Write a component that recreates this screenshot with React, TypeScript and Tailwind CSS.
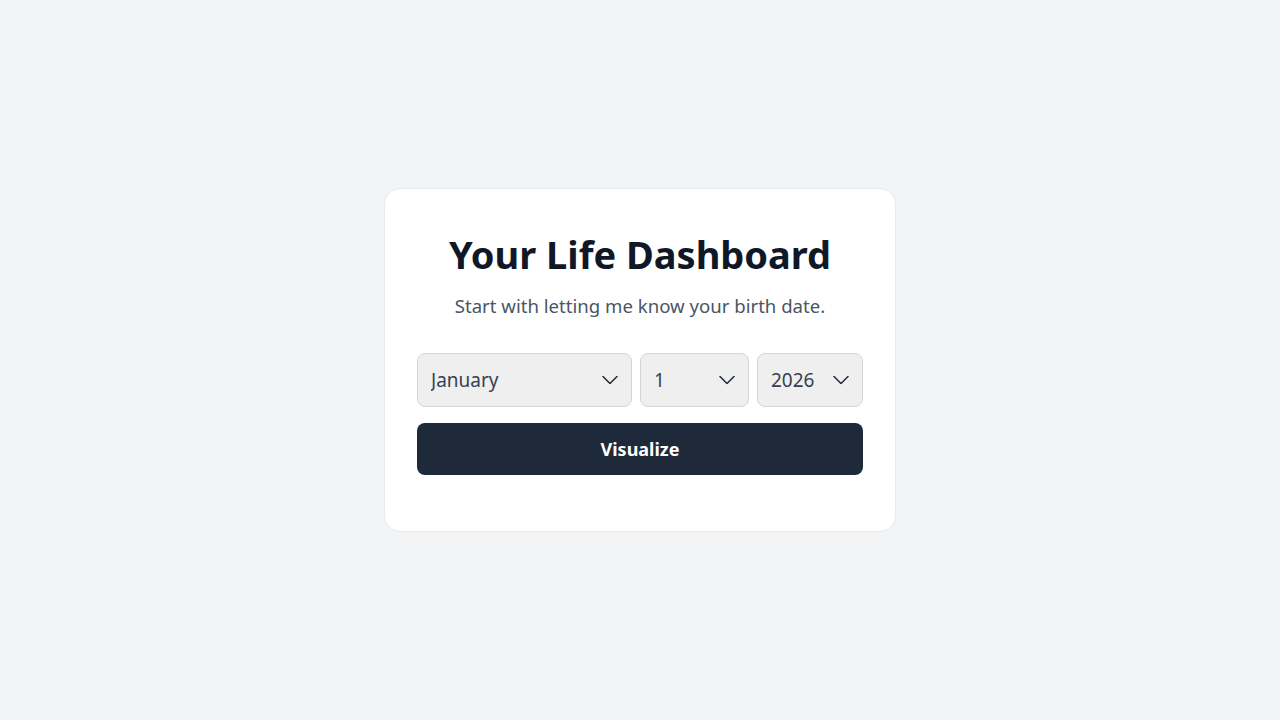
import { useState } from "react";

const MONTHS = [
  "January",
  "February",
  "March",
  "April",
  "May",
  "June",
  "July",
  "August",
  "September",
  "October",
  "November",
  "December",
];

const DAYS = Array.from({ length: 31 }, (_, i) => i + 1);
const YEARS = Array.from({ length: 127 }, (_, i) => 2026 - i);

function Chevron() {
  return (
    <svg
      className="pointer-events-none absolute right-[14px] top-1/2 -translate-y-1/2"
      width="16"
      height="9"
      viewBox="0 0 16 9"
      fill="none"
    >
      <path d="M1 1l7 7 7-7" stroke="#1f2937" strokeWidth="1.5" strokeLinecap="round" strokeLinejoin="round" />
    </svg>
  );
}

interface SelectProps {
  value: string | number;
  onChange: (v: string) => void;
  options: (string | number)[];
  className: string;
}

function Select({ value, onChange, options, className }: SelectProps) {
  return (
    <div className={`relative ${className}`}>
      <select
        value={value}
        onChange={(e) => onChange(e.target.value)}
        className="h-[54px] w-full appearance-none rounded-lg border border-gray-300 bg-[#efefef] pl-[13px] pr-10 text-[19px] text-gray-700 outline-none"
      >
        {options.map((o) => (
          <option key={o} value={o}>
            {o}
          </option>
        ))}
      </select>
      <Chevron />
    </div>
  );
}

export default function App() {
  const [month, setMonth] = useState("January");
  const [day, setDay] = useState("1");
  const [year, setYear] = useState("2026");

  return (
    <div
      className="flex min-h-screen items-center justify-center bg-gray-100"
      style={{ fontFamily: '"Noto Sans", sans-serif' }}
    >
      <div className="w-[512px] rounded-2xl border border-[#e8e9ec] bg-white px-8 pb-[56px] pt-[41px]">
        <h1 className="text-center text-[38px] font-bold leading-[48px] text-gray-900">
          Your Life Dashboard
        </h1>
        <p className="mt-[14px] text-center text-[18.6px] leading-7 text-gray-600">
          Start with letting me know your birth date.
        </p>
        <div className="mt-[33px] flex gap-2">
          <Select value={month} onChange={setMonth} options={MONTHS} className="w-[215px]" />
          <Select value={day} onChange={setDay} options={DAYS} className="w-[109px]" />
          <Select value={year} onChange={setYear} options={YEARS} className="flex-1" />
        </div>
        <button className="mt-4 h-[52px] w-full rounded-lg bg-gray-800 text-lg font-bold text-white">
          Visualize
        </button>
      </div>
    </div>
  );
}
